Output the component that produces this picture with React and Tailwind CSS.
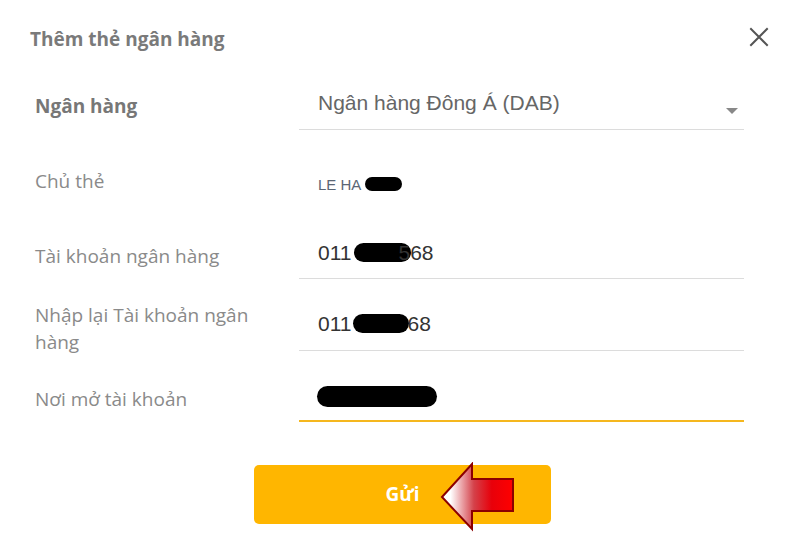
import React from "react";

const Blob = ({ className }) => (
  <span className={"inline-block bg-black rounded-full align-middle " + className} />
);

const labelCls = "w-[299px] shrink-0 pl-[35px] text-[19px] leading-[27px] text-[#8a8a8a] font-['Open_Sans',sans-serif]";

export default function App() {
  return (
    <div className="w-[800px] h-[546px] bg-white overflow-hidden font-['Liberation_Sans',Arial,sans-serif]">
      {/* header */}
      <div className="flex justify-between pl-[30px] pr-[31px] pt-[26px] h-[80px] items-start">
        <h1 className="text-[19px] leading-[26px] font-bold text-[#7a7a7a] font-['Open_Sans',sans-serif]">
          Thêm thẻ ngân hàng
        </h1>
        <svg width="20" height="20" viewBox="0 0 20 20" className="mt-[1px]">
          <path d="M2 2 L18 18 M18 2 L2 18" stroke="#555" strokeWidth="2" strokeLinecap="square" />
        </svg>
      </div>

      {/* bank */}
      <div className="flex h-[50px]">
        <div className={labelCls + " pt-[13px] font-bold text-[#777]"}>Ngân hàng</div>
        <div className="w-[445px] border-b border-[#dcdcdc] pt-[10px] pl-[19px] flex justify-between">
          <span className="text-[21px] leading-[26px] text-[#666]">Ngân hàng Đông Á (DAB)</span>
          <svg width="12" height="7" viewBox="0 0 12 7" className="mt-[18px] mr-[6px]">
            <path d="M0 0 H12 L6 6 Z" fill="#888" />
          </svg>
        </div>
      </div>

      {/* holder */}
      <div className="flex h-[100px]">
        <div className={labelCls + " pt-[38px]"}>Chủ thẻ</div>
        <div className="w-[445px] pt-[43px] pl-[19px]">
          <span className="text-[15px] leading-[20px] text-[#5b6675]">LE HA</span>
          <Blob className="w-[37px] h-[14px] ml-[4px] mb-[3px]" />
        </div>
      </div>

      {/* account */}
      <div className="flex h-[49px]">
        <div className={labelCls + " pt-[13px]"}>Tài khoản ngân hàng</div>
        <div className="w-[445px] border-b border-[#dcdcdc] pt-[10px] pl-[19px] text-[21px] leading-[26px] text-[#333]">
          011<Blob className="w-[57px] h-[19px] ml-[3px] mr-[-13px] mb-[3px]" />568
        </div>
      </div>

      {/* confirm account */}
      <div className="flex h-[72px]">
        <div className={labelCls + " pt-[23px]"}>
          Nhập lại Tài khoản ngân
          <br />
          hàng
        </div>
        <div className="w-[445px] border-b border-[#dcdcdc] pt-[32px] pl-[19px] text-[21px] leading-[26px] text-[#333]">
          011<Blob className="w-[56px] h-[19px] ml-[2px] mr-[-2px] mb-[3px]" />68
        </div>
      </div>

      {/* place */}
      <div className="flex h-[71px]">
        <div className={labelCls + " pt-[35px]"}>Nơi mở tài khoản</div>
        <div className="w-[445px] border-b-2 border-b-[#f5b71e] pt-[33px] pl-[18px] leading-[24px]">
          <Blob className="w-[120px] h-[21px]" />
        </div>
      </div>

      {/* submit */}
      <div className="pt-[43px] pl-[254px]">
        <button className="relative w-[297px] h-[59px] rounded-[5px] bg-[#ffb600] text-white font-bold text-[19px] font-['Open_Sans',sans-serif]">
          Gửi
          <svg width="76" height="70" viewBox="0 0 76 70" className="absolute left-[186px] top-[-3px]">
            <defs>
              <linearGradient id="arr" x1="0" y1="0" x2="1" y2="0">
                <stop offset="0.12" stopColor="#ffffff" />
                <stop offset="0.45" stopColor="#d4414a" />
                <stop offset="0.7" stopColor="#e8000a" />
                <stop offset="1" stopColor="#ff0000" />
              </linearGradient>
            </defs>
            <polygon
              points="2,35 32,2 32,17 73,17 73,49 32,49 32,67"
              fill="url(#arr)"
              stroke="#8c0000"
              strokeWidth="2"
              strokeLinejoin="miter"
            />
          </svg>
        </button>
      </div>
    </div>
  );
}
